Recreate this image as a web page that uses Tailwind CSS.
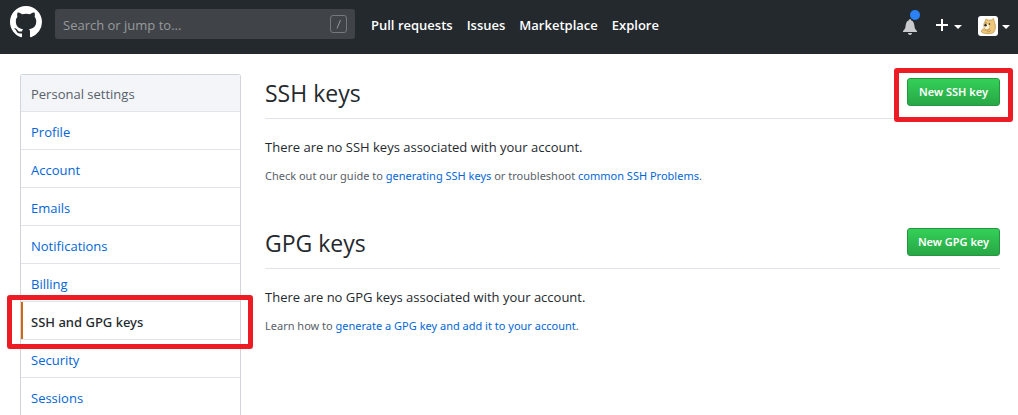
<!DOCTYPE html>
<html lang="en">
<head>
<meta charset="utf-8">
<meta name="viewport" content="width=device-width, initial-scale=1">
<title>SSH and GPG keys</title>
<script src="https://cdn.jsdelivr.net/npm/@tailwindcss/browser@4"></script>
</head>
<body class="bg-white font-['Open_Sans','Noto_Sans',sans-serif] text-[13px] leading-5 text-[#24292e]">
<header class="flex h-[54px] items-start bg-[#24292e] pl-[10px] pr-2 text-white">
  <a href="#" aria-label="Homepage" class="mt-[6px] block">
    <svg class="size-8" viewBox="0 0 16 16" fill="currentColor" aria-hidden="true"><path d="M8 0C3.58 0 0 3.58 0 8c0 3.54 2.29 6.53 5.47 7.59.4.07.55-.17.55-.38 0-.19-.01-.82-.01-1.49-2.01.37-2.53-.49-2.69-.94-.09-.23-.48-.94-.82-1.13-.28-.15-.68-.52-.01-.53.63-.01 1.08.58 1.23.82.72 1.21 1.87.87 2.33.66.07-.52.28-.87.51-1.07-1.78-.2-3.64-.89-3.64-3.95 0-.87.31-1.59.82-2.15-.08-.2-.36-1.02.08-2.12 0 0 .67-.21 2.2.82.64-.18 1.32-.27 2-.27s1.36.09 2 .27c1.53-1.04 2.2-.82 2.2-.82.44 1.1.16 1.92.08 2.12.51.56.82 1.27.82 2.15 0 3.07-1.87 3.75-3.65 3.95.29.25.54.73.54 1.48 0 1.07-.01 1.93-.01 2.2 0 .21.15.46.55.38A8.01 8.01 0 0 0 16 8c0-4.42-3.58-8-8-8z"/></svg>
  </a>
  <label class="ml-[13px] mt-[9px] flex h-[30px] w-[300px] items-center rounded-[3px] bg-[#404448] pl-2 pr-2">
    <input type="text" aria-label="Search or jump to" placeholder="Search or jump to..." class="min-w-0 flex-1 bg-transparent pt-[2px] text-[13px] leading-5 outline-none placeholder:text-[#979a9c]">
    <svg class="h-[18px] w-[17px]" viewBox="0 0 17 18" fill="none" stroke="#75797c" aria-hidden="true"><rect x=".5" y=".5" width="16" height="17" rx="2.5"/><path d="M10.500 5 7 13.500" stroke="#979a9c"/></svg>
  </label>
  <nav class="ml-4 mt-[15px] flex gap-[14px] text-[13px] font-semibold">
    <a href="#">Pull requests</a>
    <a href="#">Issues</a>
    <a href="#">Marketplace</a>
    <a href="#">Explore</a>
  </nav>
  <div class="ml-auto mt-[9px] flex h-8 items-center">
    <button type="button" aria-label="Notifications" class="mr-4 block">
      <svg class="h-8 w-[18px]" viewBox="0 0 18 32" aria-hidden="true"><path fill="#c9cacb" d="M1 22v1h14v-1l-1-1c-1.500-1.500-1.300-3-1.800-5.500-.4-2.400-1.800-4-3.200-4.300-.1-.8-.4-1.200-1-1.200s-.9.400-1 1.200c-1.500.3-2.800 1.900-3.200 4.300-.5 2.500-.3 4-1.800 5.500zM6 24h4c0 1.100-.9 2-2 2s-2-.9-2-2z"/><circle cx="13" cy="6" r="5" fill="#2a82f5"/></svg>
    </button>
    <button type="button" aria-label="Create new" class="mr-4 flex items-center gap-[6px]">
      <svg class="size-3" viewBox="0 0 12 12" stroke="currentColor" stroke-width="2" aria-hidden="true"><path d="M6 0v12M0 6h12"/></svg>
      <svg class="mt-[3px] h-1 w-2" viewBox="0 0 8 4" fill="currentColor" aria-hidden="true"><path d="M0 0h8L4 4z"/></svg>
    </button>
    <button type="button" aria-label="Account menu" class="flex items-center gap-1">
      <svg class="mt-[2px] size-5" viewBox="0 0 20 20" aria-hidden="true"><rect width="20" height="20" rx="3" fill="#fff"/><path d="M3.500 16C3 14.500 4.500 13 6.500 12.500 5.300 10 5.800 7 7 5.500L8 3l2 1.200 3.500-.2L15.500 2.500l1 4c1.500 3 1.100 7.500-.8 9.800-2 1.900-9.700 2-12.200-.3z" fill="#edc77b" stroke="#bc8b3b" stroke-width=".7"/><path d="M6.500 9.500c1.300-1.700 3.400-1.500 4.300 0 1 1.700.2 3.400-1.800 3.700-2 .2-3.300-1.700-2.500-3.700z" fill="#fff4d8"/><path d="M6.500 14c2 .6 4-.1 5.500-1.300M9 16c2-.2 3-.8 4-1.700" stroke="#a87836" stroke-width=".7" fill="none"/><circle cx="7.500" cy="9.200" r="1.200" fill="#292522"/><circle cx="11.500" cy="8" r=".8" fill="#292522"/><circle cx="8" cy="7" r=".5" fill="#292522"/></svg>
      <svg class="mt-[3px] h-1 w-2" viewBox="0 0 8 4" fill="currentColor" aria-hidden="true"><path d="M0 0h8L4 4z"/></svg>
    </button>
  </div>
</header>

<div class="flex items-start gap-6 pl-5 pr-[18px] pt-5">
  <nav aria-label="Personal settings" class="w-[221px] shrink-0 rounded-t-[3px] border-x border-t border-[#d1d5da] text-[#0366d6]">
    <h3 class="flex h-[37px] items-center border-b border-[#e1e4e8] bg-[#f3f5f8] px-[10px] pt-[2px] font-medium text-[#586069]">Personal settings</h3>
    <a href="#" class="flex h-[38px] items-center border-b border-[#e1e4e8] px-[10px] pt-[2px]">Profile</a>
    <a href="#" class="flex h-[38px] items-center border-b border-[#e1e4e8] px-[10px] pt-[2px]">Account</a>
    <a href="#" class="flex h-[38px] items-center border-b border-[#e1e4e8] px-[10px] pt-[2px]">Emails</a>
    <a href="#" class="flex h-[38px] items-center border-b border-[#e1e4e8] px-[10px] pt-[2px]">Notifications</a>
    <a href="#" class="flex h-[38px] items-center border-b border-[#e1e4e8] px-[10px] pt-[2px]">Billing</a>
    <a href="#" aria-current="page" class="relative flex h-[38px] items-center border-b border-[#e1e4e8] px-[10px] pt-[2px] font-['Noto_Sans',sans-serif] font-medium text-[#24292e]">
      <span class="absolute inset-y-0 left-0 w-[2px] bg-[#d26911]"></span>
      SSH and GPG keys
      <span class="pointer-events-none absolute -bottom-[10px] -left-[14px] -right-[13px] -top-[7px] rounded-[3px] border-5 border-[#ed1c24]"></span>
    </a>
    <a href="#" class="flex h-[38px] items-center border-b border-[#e1e4e8] px-[10px] pt-[2px]">Security</a>
    <a href="#" class="flex h-[37px] items-center px-[10px] pt-[2px]">Sessions</a>
  </nav>

  <main class="min-w-0 flex-1">
    <section>
      <div class="flex h-[45px] items-start justify-between border-b border-[#e1e4e8]">
        <h2 class="pt-[3px] text-[23px] leading-8">SSH keys</h2>
        <div class="relative mt-1">
          <button type="button" class="block h-7 w-[93px] rounded-[3px] border border-[#269542] bg-linear-to-b from-[#34d058] to-[#28a745] font-['Noto_Sans',sans-serif] text-[11px] font-semibold text-white">New SSH key</button>
          <span class="pointer-events-none absolute -bottom-4 -left-[13px] -right-[13px] -top-[10px] rounded-[3px] border-5 border-[#ed1c24]"></span>
        </div>
      </div>
      <p class="mt-[18px]">There are no SSH keys associated with your account.</p>
      <p class="mt-[9px] font-['Noto_Sans',sans-serif] text-[11px] text-[#586069]">Check out our guide to <a href="#" class="text-[#0366d6]">generating SSH keys</a> or troubleshoot <a href="#" class="text-[#0366d6]">common SSH Problems</a>.</p>
    </section>
    <section class="mt-[38px]">
      <div class="flex h-[45px] items-start justify-between border-b border-[#e1e4e8]">
        <h2 class="pt-[3px] text-[23px] leading-8">GPG keys</h2>
        <button type="button" class="mt-1 block h-7 w-[93px] rounded-[3px] border border-[#269542] bg-linear-to-b from-[#34d058] to-[#28a745] font-['Noto_Sans',sans-serif] text-[11px] font-semibold text-white">New GPG key</button>
      </div>
      <p class="mt-[18px]">There are no GPG keys associated with your account.</p>
      <p class="mt-[9px] font-['Noto_Sans',sans-serif] text-[11px] text-[#586069]">Learn how to <a href="#" class="text-[#0366d6]">generate a GPG key and add it to your account</a>.</p>
    </section>
  </main>
</div>
</body>
</html>
